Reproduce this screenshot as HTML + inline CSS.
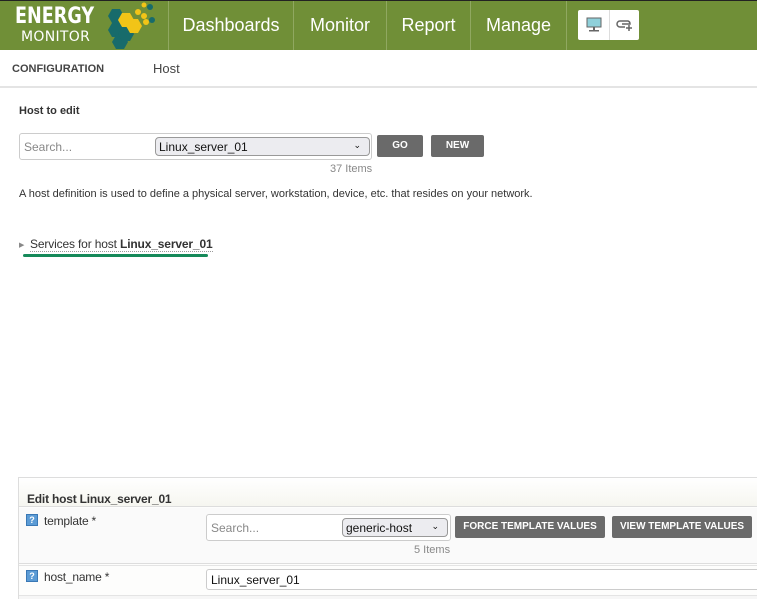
<!DOCTYPE html>
<html><head><style>
*{box-sizing:border-box;margin:0;padding:0}
body{width:757px;height:599px;overflow:hidden;background:#fff;font-family:"Liberation Sans",Arial,sans-serif;position:relative}
.hdr{position:absolute;left:0;top:0;width:757px;height:50px;background:#708f37;border-top:1px solid #222}
.nav{position:absolute;top:0;height:49px;color:#fff;font-size:18px;line-height:49px;border-left:1px solid #90a860;text-align:center;font-family:"Liberation Sans",sans-serif}
.ab{position:absolute;color:#333;font-size:11px}
.btn{position:absolute;background:#6a6a6a;color:#fff;font-weight:bold;font-size:10px;text-align:center;border-radius:2px}
</style></head><body>
<div class="hdr">
 <div style="position:absolute;left:15px;top:5px;color:#fff;font-family:'DejaVu Sans',sans-serif;font-weight:bold;font-size:22px;line-height:22px;transform:scaleX(0.8);transform-origin:left">ENERGY</div>
 <div style="position:absolute;left:21px;top:29px;color:#fff;font-family:'DejaVu Sans',sans-serif;font-size:14px;letter-spacing:0.3px;line-height:14px">MONITOR</div>
 <svg style="position:absolute;left:108px;top:0" width="50" height="50">
  <g fill="#176b6b"><polygon points="4,8 12,8 16,15 12,22 4,22 0,15"/><polygon points="4,22 12,22 16,29 12,36 4,36 0,29"/><polygon points="8,34 16,34 20,41 16,48 8,48 4,41"/><polygon points="14,26 22,26 26,33 22,40 14,40 10,33"/><circle cx="42" cy="6" r="3"/><circle cx="44" cy="19" r="3"/></g>
  <g fill="#f2c417"><polygon points="14,12 22,12 26,19 22,26 14,26 10,19"/><polygon points="22,18 30,18 34,25 30,32 22,32 18,25"/><circle cx="30" cy="11" r="3"/><circle cx="36" cy="15" r="3"/><circle cx="36" cy="4" r="2.5"/><circle cx="38" cy="21" r="3"/></g>
 </svg>
 <div class="nav" style="left:168px;width:125px">Dashboards</div>
 <div class="nav" style="left:293px;width:93px">Monitor</div>
 <div class="nav" style="left:386px;width:84px">Report</div>
 <div class="nav" style="left:470px;width:96px">Manage</div>
 <div class="nav" style="left:566px;width:1px"></div>
 <div style="position:absolute;left:578px;top:9px;width:61px;height:30px;background:#fff;border-radius:2px">
  <div style="position:absolute;left:31px;top:0;width:1px;height:30px;background:#ddd"></div>
  <svg style="position:absolute;left:7px;top:6px" width="18" height="18"><rect x="2" y="2" width="14" height="9" fill="#8fd0da" stroke="#666" stroke-width="1"/><rect x="8" y="11" width="2" height="3" fill="#666"/><rect x="4" y="14" width="10" height="1.5" fill="#666"/></svg>
  <svg style="position:absolute;left:37px;top:6px" width="20" height="18"><path d="M10 5H5a3 3 0 0 0 0 6h5M7 8h8a3 3 0 0 0 -2-3h-3" fill="none" stroke="#666" stroke-width="1.5"/><path d="M14 9v6M11 12h6" stroke="#666" stroke-width="1.5"/></svg>
 </div>
</div>
<div style="position:absolute;left:0;top:50px;width:757px;height:38px;border-bottom:2px solid #e4e4e4"></div>
<div style="position:absolute;left:12px;top:63px;font-size:11px;font-weight:bold;color:#444;font-family:'Liberation Sans',sans-serif">CONFIGURATION</div>
<div style="position:absolute;left:153px;top:61px;font-size:13px;color:#444;font-family:'Liberation Sans',sans-serif">Host</div>
<div class="ab" style="left:19px;top:105px;font-weight:bold">Host to edit</div>
<div style="position:absolute;left:19px;top:133px;width:353px;height:27px;border:1px solid #ccc;border-radius:3px"></div>
<div style="position:absolute;left:24px;top:140px;font-size:12px;color:#888">Search...</div>
<div style="position:absolute;left:155px;top:137px;width:215px;height:19px;border:1px solid #999;border-radius:4px;background:#ececf0;font-size:12px;color:#111;padding:2px 3px">Linux_server_01<span style="position:absolute;right:8px;top:2px;font-size:9px">⌄</span></div>
<div class="btn" style="left:377px;top:135px;width:46px;height:22px;line-height:22px">GO</div>
<div class="btn" style="left:431px;top:135px;width:53px;height:22px;line-height:22px">NEW</div>
<div style="position:absolute;left:330px;top:163px;font-size:11px;color:#888">37 Items</div>
<div class="ab" style="left:19px;top:188px">A host definition is used to define a physical server, workstation, device, etc. that resides on your network.</div>
<div style="position:absolute;left:19px;top:241px;font-size:7px;color:#888">▶</div>
<div style="position:absolute;left:30px;top:237px;font-size:12px;letter-spacing:-0.15px;color:#333;border-bottom:1px dotted #999">Services for host <b>Linux_server_01</b></div>
<div style="position:absolute;left:23px;top:254px;width:185px;height:3px;background:#168a5a;border-radius:2px"></div>
<div style="position:absolute;left:18px;top:477px;width:739px;height:122px;border-top:1px solid #ddd;border-left:1px solid #ddd;background:#fdfdfc"></div>
<div style="position:absolute;left:19px;top:478px;width:738px;height:29px;background:linear-gradient(#fff,#f6f6f0);border-bottom:1px solid #ddd"></div>
<div class="ab" style="left:27px;top:492px;font-weight:bold;font-size:12px;letter-spacing:-0.2px">Edit host Linux_server_01</div>
<div style="position:absolute;left:19px;top:508px;width:738px;height:56px;background:#fafafa;border-bottom:1px solid #ddd"></div>
<div style="position:absolute;left:26px;top:514px;width:12px;height:12px;background:#5b9bd5;border:1px solid #3a78b5;color:#fff;font-size:9px;line-height:10px;text-align:center;font-weight:bold">?</div>
<div class="ab" style="left:44px;top:514px;font-size:12px;letter-spacing:-0.2px">template *</div>
<div style="position:absolute;left:206px;top:514px;width:245px;height:27px;border:1px solid #ccc;border-radius:3px;background:#fff"></div>
<div style="position:absolute;left:211px;top:521px;font-size:12px;color:#888">Search...</div>
<div style="position:absolute;left:342px;top:518px;width:106px;height:19px;border:1px solid #999;border-radius:4px;background:#ececf0;font-size:12px;color:#111;padding:2px 3px">generic-host<span style="position:absolute;right:8px;top:2px;font-size:9px">⌄</span></div>
<div class="btn" style="left:455px;top:516px;width:150px;height:22px;line-height:22px;font-size:10px">FORCE TEMPLATE VALUES</div>
<div class="btn" style="left:612px;top:516px;width:140px;height:22px;line-height:22px;font-size:10px">VIEW TEMPLATE VALUES</div>
<div style="position:absolute;left:414px;top:544px;font-size:11px;color:#888">5 Items</div>
<div style="position:absolute;left:19px;top:565px;width:738px;height:1px;background:#e4e4e4"></div>
<div style="position:absolute;left:26px;top:570px;width:12px;height:12px;background:#5b9bd5;border:1px solid #3a78b5;color:#fff;font-size:9px;line-height:10px;text-align:center;font-weight:bold">?</div>
<div class="ab" style="left:44px;top:570px;font-size:12px;letter-spacing:-0.2px">host_name *</div>
<div style="position:absolute;left:206px;top:569px;width:560px;height:21px;border:1px solid #ccc;border-radius:3px;background:#fff;font-size:12px;padding:3px 4px;color:#111">Linux_server_01</div>
<div style="position:absolute;left:19px;top:595px;width:738px;height:4px;background:#f6f6f6;border-top:1px solid #e4e4e4"></div>
</body></html>
